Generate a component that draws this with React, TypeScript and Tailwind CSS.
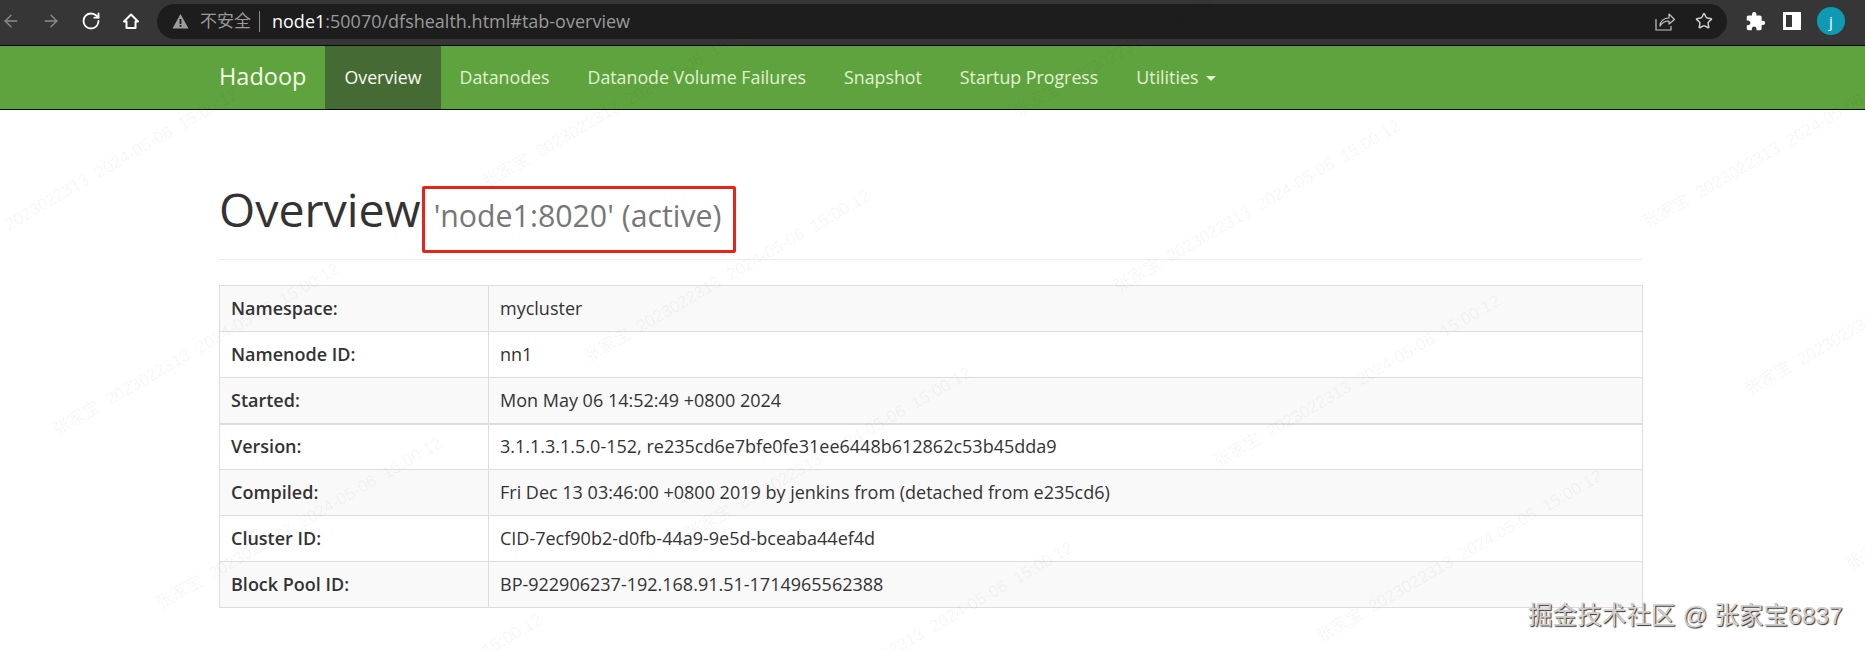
import { ArrowLeft, ArrowRight, RotateCw, Star } from 'lucide-react';
import { MdExtension } from 'react-icons/md';

const SANS = 'font-["Open_Sans","Noto_Sans_CJK_SC",sans-serif]';

const NAV_ITEMS = ['Datanodes', 'Datanode Volume Failures', 'Snapshot', 'Startup Progress'];

const ROWS_TOP = [
  ['Namespace:', 'mycluster'],
  ['Namenode ID:', 'nn1'],
  ['Started:', 'Mon May 06 14:52:49 +0800 2024'],
];

const ROWS_BOTTOM = [
  ['Version:', '3.1.1.3.1.5.0-152, re235cd6e7bfe0fe31ee6448b612862c53b45dda9'],
  ['Compiled:', 'Fri Dec 13 03:46:00 +0800 2019 by jenkins from (detached from e235cd6)'],
  ['Cluster ID:', 'CID-7ecf90b2-d0fb-44a9-9e5d-bceaba44ef4d'],
  ['Block Pool ID:', 'BP-922906237-192.168.91.51-1714965562388'],
];

// right hand end of each rotated watermark, as [x, y]
const WATERMARKS = [
  [237, 93], [338, 268], [441, 442], [541, 619],
  [768, 20], [869, 195], [970, 372], [1072, 547],
  [1298, -50], [1399, 125], [1499, 300], [1601, 475],
  [1928, 61], [2030, 228], [2131, 403],
];

function Toolbar() {
  return (
    <div className="flex h-[45px] items-center bg-[#363636] pb-[3px]">
      <div className="flex w-[157px] items-center pl-[1px]">
        <ArrowLeft size={20} strokeWidth={1.6} className="text-[#8c8c8c]" />
        <ArrowRight size={20} strokeWidth={1.6} className="ml-[20px] text-[#8c8c8c]" />
        <RotateCw size={20} strokeWidth={2.2} className="ml-[20px] text-white" />
        <svg width="18" height="18" viewBox="0 0 18 18" className="ml-[21px]">
          <path d="M2 9.5 9 2.5l7 7h-2.5V16h-9V9.5Z" fill="none" stroke="#fff" strokeWidth="2" strokeLinejoin="round" />
        </svg>
      </div>
      <div className="flex h-[35px] w-[1570px] items-center rounded-full bg-[#1d1d1d] pl-[15px]">
        <svg width="17" height="16" viewBox="0 0 17 16">
          <path d="M8.5 1 16.5 15.5H.5Z" fill="#9c9c9c" />
          <rect x="7.6" y="6" width="1.8" height="5" fill="#1d1d1d" />
          <rect x="7.6" y="12" width="1.8" height="1.8" fill="#1d1d1d" />
        </svg>
        <span className="ml-[11px] text-[17px] text-[#9a9a9a]">不安全</span>
        <span className="ml-[8px] h-[21px] w-px bg-[#8a8a8a]" />
        <span className="ml-[12px] text-[18px] text-[#9a9a9a]">
          <span className="text-white">node1</span>:50070/dfshealth.html#tab-overview
        </span>
        <svg width="20" height="19" viewBox="0 0 20 19" fill="none" stroke="#c4c4c4" strokeWidth="1.2" className="ml-auto">
          <path d="M1 7v11h15v-4" />
          <path d="M5 14c0-5 4-8 9-8V2l5.500 5.500L14 12V9c-4 0-7 1.500-9 5Z" strokeLinejoin="round" />
        </svg>
        <Star size={18} strokeWidth={2} className="ml-[20px] mr-[14px] text-[#cfcfcf]" />
      </div>
      <div className="ml-[18px] flex items-center">
        <MdExtension size={21} className="text-white" />
        <div className="ml-[17px] flex h-[18px] w-[18px] border-[3px] border-white">
          <div className="flex-1" />
          <div className="w-[6px] bg-white" />
        </div>
        <div className="ml-[16px] flex h-[28px] w-[28px] items-center justify-center rounded-full bg-[#0f9ab3] text-[15px] text-white">
          j
        </div>
      </div>
    </div>
  );
}

function NavBar() {
  return (
    <nav className="flex h-[65px] items-stretch border-y border-[#080808] bg-[#5fa33e] pb-px pl-[219px] text-[17.8px] text-[#e2f2d2]">
      <a className="flex items-center pr-[19px] text-[23.5px] text-[#f4faea]">Hadoop</a>
      <a className="-mb-px flex items-center bg-[#466a34] px-[19px] text-[#f6fbf0]">Overview</a>
      {NAV_ITEMS.map((item) => (
        <a key={item} className="flex items-center px-[19px]">
          {item}
        </a>
      ))}
      <a className="flex items-center px-[19px]">
        Utilities
        <span className="ml-[8px] mt-[2px] h-0 w-0 border-x-[5px] border-t-[5px] border-x-transparent border-t-[#e2f2d2]" />
      </a>
    </nav>
  );
}

function InfoRows({ rows, startShaded }: { rows: string[][]; startShaded: boolean }) {
  return (
    <>
      {rows.map(([label, value], i) => {
        const shaded = startShaded ? i % 2 === 0 : i % 2 === 1;
        return (
          <tr key={label} className={shaded ? 'bg-[#f9f9f9]' : 'bg-white'}>
            <th className="h-[46px] w-[269px] border border-[#ddd] px-[11px] text-left font-semibold">{label}</th>
            <td className="h-[46px] border border-[#ddd] px-[11px]">{value}</td>
          </tr>
        );
      })}
    </>
  );
}

function Watermarks() {
  return (
    <div className="pointer-events-none absolute inset-0 overflow-hidden">
      {WATERMARKS.map(([x, y]) => (
        <div
          key={`${x}-${y}`}
          className='absolute w-[380px] origin-right -rotate-30 whitespace-pre text-right font-["Liberation_Sans","Noto_Sans_CJK_SC",sans-serif] text-[17px] leading-[20px] text-black/[0.05]'
          style={{ left: x - 380, top: y - 10 }}
        >
          张家宝  2023022313  2024-05-06  15:00:12
        </div>
      ))}
    </div>
  );
}

export default function App() {
  return (
    <div className={`relative h-[650px] w-[1865px] overflow-hidden bg-white text-[#333] ${SANS}`}>
      <Toolbar />
      <NavBar />
      <main className="ml-[219px] w-[1424px]">
        <div className="relative mt-[40px] flex h-[110px] items-baseline border-b border-[#eee] pt-[29px]">
          <h1 className="text-[46.5px] leading-[60px]">Overview</h1>
          <small className="ml-[13px] text-[30.3px] text-[#777]">'node1:8020' (active)</small>
          <div className="absolute left-[203px] top-[36px] h-[67px] w-[314px] rounded-[2px] border-[3px] border-[#e8231a]" />
        </div>
        <table className="mt-[25px] w-full border-collapse text-[18px]">
          <tbody>
            <InfoRows rows={ROWS_TOP} startShaded />
          </tbody>
          <tbody className="border-t-2 border-[#ddd]">
            <InfoRows rows={ROWS_BOTTOM} startShaded={false} />
          </tbody>
        </table>
      </main>
      <Watermarks />
      <div className='absolute left-[1528px] top-[598px] font-["Liberation_Sans","Noto_Sans_CJK_SC",sans-serif] text-[24.6px] leading-[36px] text-[#cfcfcf] [text-shadow:1px_1px_1px_#333]'>
        掘金技术社区 @ 张家宝6837
      </div>
    </div>
  );
}
